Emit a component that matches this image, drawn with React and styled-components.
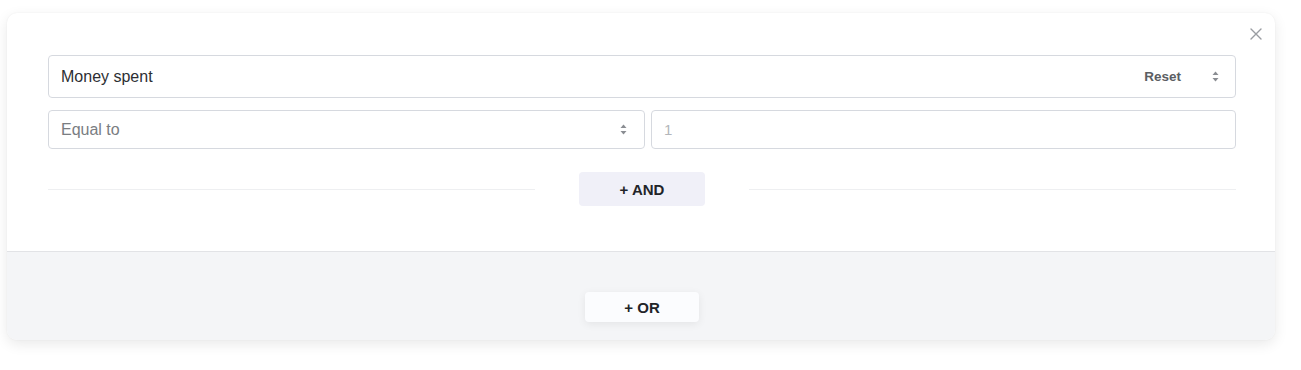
import styled, { createGlobalStyle } from "styled-components";

const GlobalStyle = createGlobalStyle`
  html, body {
    margin: 0;
    padding: 0;
    background: #fff;
    font-family: "Liberation Sans", Arial, sans-serif;
  }
`

const Page = styled.div`
  padding: 13px 26px 30px 7px;
`

const Card = styled.section`
  position: relative;
  width: 1268px;
  border-radius: 10px;
  background: #fff;
  box-shadow: 0 4px 14px rgba(0, 0, 0, 0.09), 0 0 2px rgba(0, 0, 0, 0.06);
  overflow: hidden;
`

const Top = styled.div`
  padding: 42px 39px 45px 41px;
  border-bottom: 1px solid #e2e3e6;
  display: flex;
  flex-direction: column;
`

const CloseButton = styled.button`
  position: absolute;
  top: 15px;
  right: 13px;
  width: 12px;
  height: 12px;
  padding: 0;
  border: none;
  background: none;
  display: flex;
  cursor: pointer;
`

const Field = styled.div`
  height: ${p => p.$h}px;
  box-sizing: border-box;
  border: 1px solid #d6d9df;
  border-radius: 4px;
  background: #fff;
  display: flex;
  align-items: center;
  padding: 0 ${p => p.$pr || 12}px 0 12px;
  font-size: 16px;
  color: ${p => p.$muted ? "#7a7d82" : "#2d2f33"};
`

const Grow = styled.span`
  flex: 1;
`

const ResetLink = styled.span`
  font-size: 13.5px;
  font-weight: bold;
  color: #5b5e63;
  margin-right: 31px;
`

const Row = styled.div`
  margin-top: 12px;
  display: grid;
  grid-template-columns: 597px 1fr;
  gap: 6px;
`

const Placeholder = styled.span`
  color: #b3b6bb;
  font-size: 15px;
`

const Divider = styled.div`
  margin-top: 23px;
  display: flex;
  align-items: center;
  gap: 44px;
`

const Line = styled.div`
  flex: 1;
  height: 1px;
  background: #eeeff1;
`

const AndButton = styled.button`
  width: 126px;
  height: 34px;
  border: none;
  border-radius: 4px;
  background: #f0f0f8;
  font-family: "Liberation Sans", Arial, sans-serif;
  font-size: 15px;
  font-weight: bold;
  color: #222428;
`

const Bottom = styled.div`
  background: #f4f5f7;
  height: 88px;
  padding-top: 40px;
  padding-left: 2px;
  box-sizing: border-box;
  display: flex;
  justify-content: center;
  align-items: flex-start;
`

const OrButton = styled.button`
  width: 114px;
  height: 30px;
  border: none;
  border-radius: 4px;
  background: #fbfcfe;
  box-shadow: 0 2px 8px rgba(0, 0, 0, 0.07);
  font-family: "Liberation Sans", Arial, sans-serif;
  font-size: 15px;
  font-weight: bold;
  color: #222428;
`

const UpDown = () => (
  <svg width="7" height="11" viewBox="0 0 7 11" fill="#8a8d92">
    <path d="M3.5 0.5 L6.5 4 L0.5 4 Z" />
    <path d="M3.5 10.5 L6.5 7 L0.5 7 Z" />
  </svg>
)

export default function App() {
  return (
    <Page>
      <GlobalStyle />
      <Card>
        <CloseButton aria-label="Close">
          <svg width="12" height="12" viewBox="0 0 12 12" stroke="#9a9da2" strokeWidth="1.4" strokeLinecap="round">
            <path d="M1 1 L11 11 M11 1 L1 11" />
          </svg>
        </CloseButton>
        <Top>
          <Field $h={43} $pr={16}>
            <Grow>Money spent</Grow>
            <ResetLink>Reset</ResetLink>
            <UpDown />
          </Field>
          <Row>
            <Field $h={39} $muted $pr={17}>
              <Grow>Equal to</Grow>
              <UpDown />
            </Field>
            <Field $h={39}>
              <Placeholder>1</Placeholder>
            </Field>
          </Row>
          <Divider>
            <Line />
            <AndButton>+ AND</AndButton>
            <Line />
          </Divider>
        </Top>
        <Bottom>
          <OrButton>+ OR</OrButton>
        </Bottom>
      </Card>
    </Page>
  )
}
